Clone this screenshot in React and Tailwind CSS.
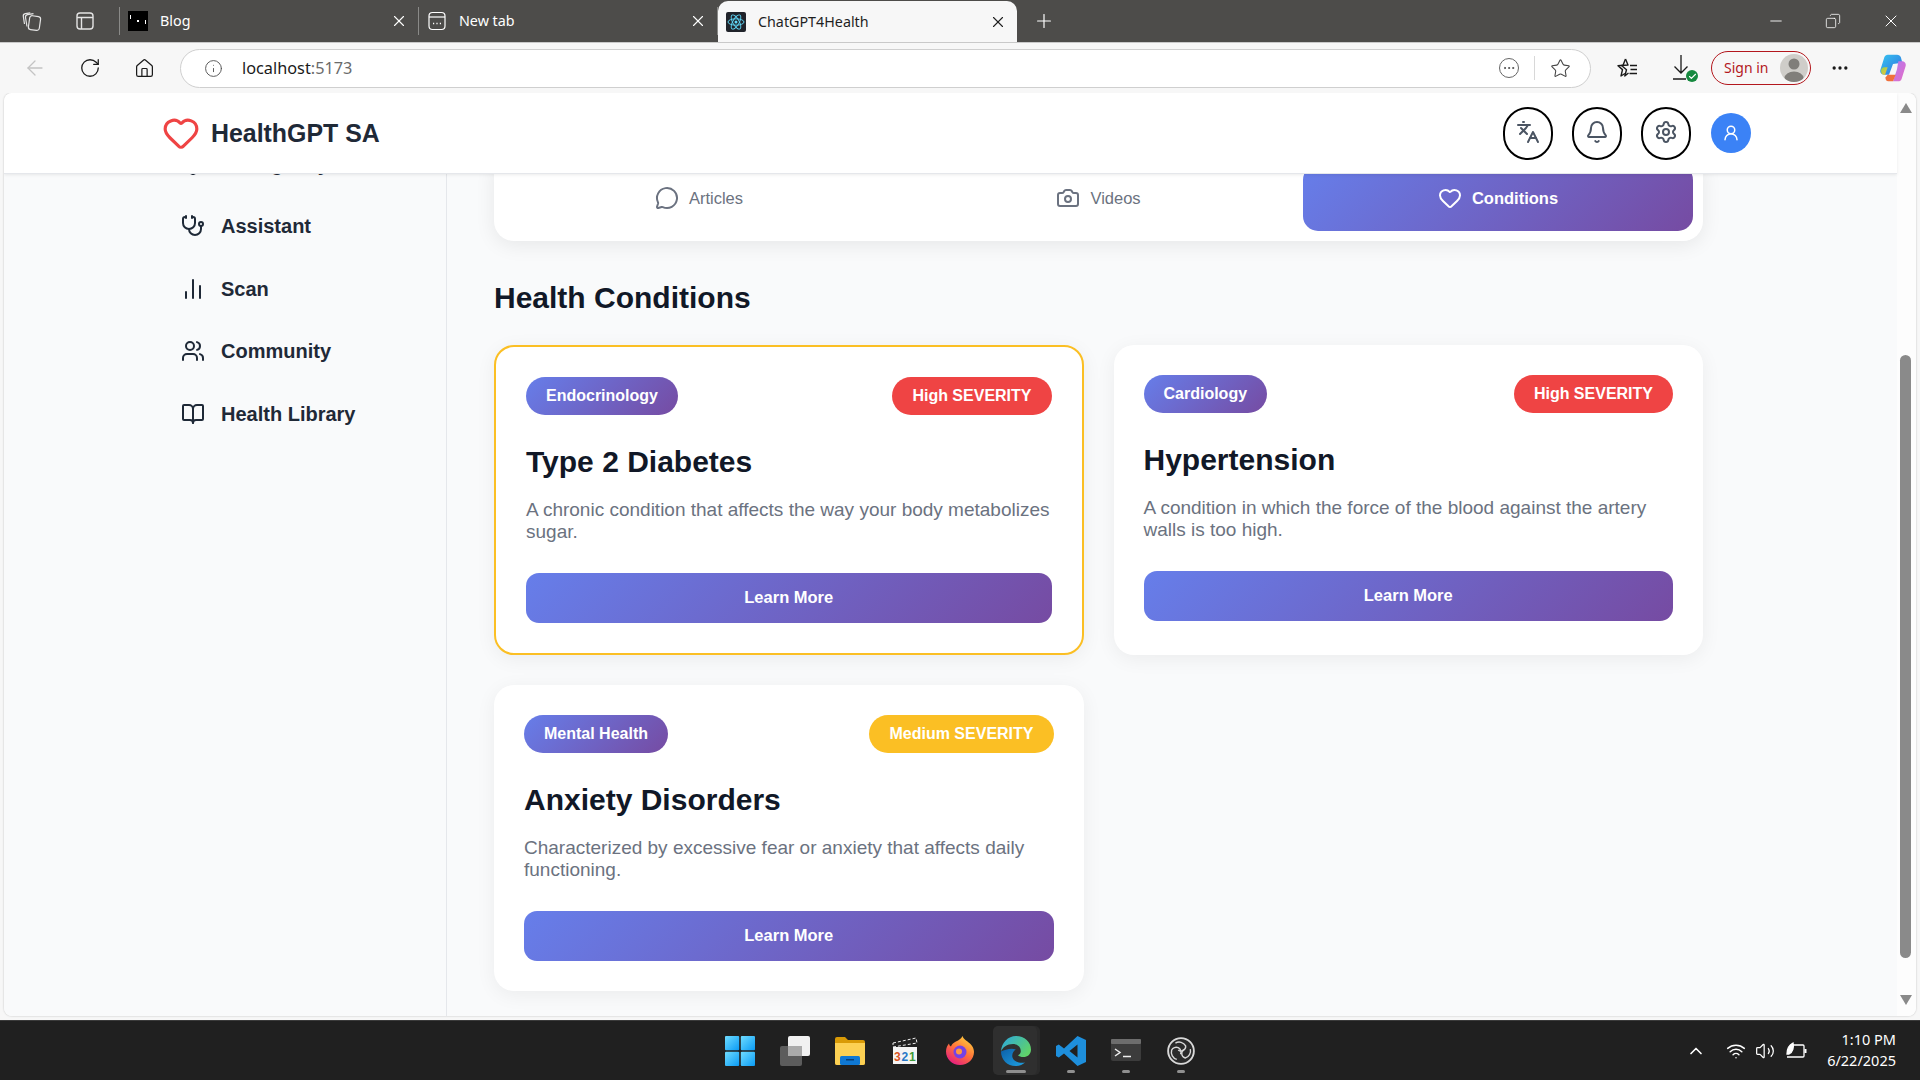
import {
  ArrowLeft, RotateCw, Home, Info, Star, MoreHorizontal, X, Plus, Minus, Heart, Languages, Bell, Settings, UserRound,
  Stethoscope, ChartNoAxesColumn, Users, BookOpen, Shield, MessageCircle, Camera, Copy, ChevronUp, Wifi, Volume2, Check,
} from 'lucide-react';

const gradient = 'bg-[linear-gradient(135deg,#667eea_0%,#764ba2_100%)]';

const navItems = [
  { name: 'Emergency', icon: Shield },
  { name: 'Assistant', icon: Stethoscope },
  { name: 'Scan', icon: ChartNoAxesColumn },
  { name: 'Community', icon: Users },
  { name: 'Health Library', icon: BookOpen },
];

const conditions = [
  { title: 'Type 2 Diabetes', field: 'Endocrinology', severity: 'High SEVERITY', sevClass: 'bg-[#ef4444]', text: 'A chronic condition that affects the way your body metabolizes sugar.', selected: true },
  { title: 'Hypertension', field: 'Cardiology', severity: 'High SEVERITY', sevClass: 'bg-[#ef4444]', text: 'A condition in which the force of the blood against the artery walls is too high.' },
  { title: 'Anxiety Disorders', field: 'Mental Health', severity: 'Medium SEVERITY', sevClass: 'bg-[#fbbf24]', text: 'Characterized by excessive fear or anxiety that affects daily functioning.' },
];

const BrowserTab = ({ icon, title, active }) => (
  <div className={`flex h-full w-[299px] items-center pl-2 pr-[10px] ${active ? 'rounded-t-[10px] bg-[#f7f7f7] text-[#1f1f1f]' : 'border-r border-[#8a8a88] text-white'}`}>
    {icon}
    <span className="ml-3 flex-1 font-['Noto_Sans',sans-serif] text-[14.300px]">{title}</span>
    <X className="h-[18px] w-[18px]" strokeWidth={1.5} />
  </div>
);

const ReactFavicon = () => (
  <svg viewBox="0 0 20 20" className="h-5 w-5 rounded-[2px] bg-[#20232a]">
    <g fill="none" stroke="#61dafb" strokeWidth="0.9">
      <ellipse cx="10" cy="10" rx="8" ry="3.2" />
      <ellipse cx="10" cy="10" rx="8" ry="3.2" transform="rotate(60 10 10)" />
      <ellipse cx="10" cy="10" rx="8" ry="3.2" transform="rotate(120 10 10)" />
    </g>
    <circle cx="10" cy="10" r="1.5" fill="#61dafb" />
  </svg>
);

const BlogFavicon = () => (
  <svg viewBox="0 0 20 20" className="h-5 w-5 bg-black">
    <rect x="2" y="4" width="1" height="4" fill="#fff" />
    <rect x="9" y="9" width="2" height="2" fill="#fff" />
    <rect x="17" y="9" width="1" height="4" fill="#fff" />
  </svg>
);

const NewTabIcon = () => (
  <svg viewBox="0 0 20 20" className="h-5 w-5" fill="none" stroke="#fff" strokeWidth="1.2">
    <rect x="2" y="1.5" width="16" height="17" rx="3.5" />
    <path d="M2 6h16" />
    <path d="M6 12.5h1.2M9.4 12.5h1.2M12.8 12.5H14" strokeWidth="1.6" />
  </svg>
);

const TabStrip = () => (
  <div className="flex h-[42px] items-center bg-[#4d4c4a] text-white">
    <svg viewBox="0 0 24 24" className="ml-[20px] h-6 w-6" fill="none" stroke="#e4e4e4" strokeWidth="1.2">
      <rect x="9" y="7" width="11" height="14" rx="2.5" transform="rotate(8 14 14)" />
      <path d="M7 17.5 5.5 8.5a2.5 2.5 0 0 1 2-2.8l6-1" />
      <path d="M4.5 15 3.3 7.4a2.4 2.4 0 0 1 2-2.7l5-.9" />
    </svg>
    <svg viewBox="0 0 24 24" className="ml-[29px] h-6 w-6" fill="none" stroke="#e4e4e4" strokeWidth="1.4">
      <rect x="4" y="4" width="16" height="16" rx="3" />
      <path d="M4 8.5h16M8.5 8.5V20" />
    </svg>
    <div className="ml-[22px] h-[28px] w-px bg-[#8a8a88]" />
    <div className="flex h-[28px] items-center">
      <BrowserTab icon={<BlogFavicon />} title="Blog" />
      <BrowserTab icon={<NewTabIcon />} title="New tab" />
    </div>
    <div className="h-full pt-[1px]">
      <BrowserTab active icon={<ReactFavicon />} title="ChatGPT4Health" />
    </div>
    <Plus className="ml-[16px] h-[22px] w-[22px]" strokeWidth={1.3} />
    <div className="ml-auto flex items-center gap-[40px] pr-[19px]">
      <Minus className="h-[18px] w-[18px]" strokeWidth={1.2} />
      <Copy className="h-[16px] w-[16px] -scale-x-100" strokeWidth={1.2} />
      <X className="h-[20px] w-[20px]" strokeWidth={1.2} />
    </div>
  </div>
);

const Toolbar = () => (
  <div className="flex h-[51px] items-center border-t border-[#c9c9c9] bg-[#f7f7f7] text-[#1a1a1a]">
    <ArrowLeft className="ml-[23px] h-6 w-6 text-[#c4c4c4]" strokeWidth={1.3} />
    <RotateCw className="ml-[32px] h-[22px] w-[22px]" strokeWidth={1.4} />
    <Home className="ml-[33px] h-[21px] w-[21px]" strokeWidth={1.4} />
    <div className="ml-[25px] flex h-[39px] w-[1411px] items-center rounded-full border border-[#cfcfcf] bg-white pl-[23px] pr-[19px]">
      <Info className="h-[19px] w-[19px] text-[#555]" strokeWidth={1.2} />
      <span className="ml-[19px] font-['Noto_Sans',sans-serif] text-[16.300px] text-[#1a1a1a]">localhost<span className="text-[#6b6b6b]">:5173</span></span>
      <div className="ml-auto flex h-5 w-5 items-center justify-center rounded-full border border-[#666]">
        <MoreHorizontal className="h-[14px] w-[14px] text-[#444]" strokeWidth={1.6} />
      </div>
      <div className="ml-[15px] h-[24px] w-px bg-[#d8d8d8]" />
      <Star className="ml-[15px] h-[21px] w-[21px] text-[#444]" strokeWidth={1.2} />
    </div>
    <svg viewBox="0 0 24 24" className="ml-[24px] h-[24px] w-[24px]" fill="none" stroke="#1a1a1a" strokeWidth="1.4" strokeLinejoin="round">
      <path d="M10.500 3 13 9l-6.500.5 5 4.200L9.800 20l3.700-3" />
      <path d="M10.500 3 8 9.300l-5 .4 4.500 3.900L6 20l4-2.500" />
      <path d="M15 9.500h7M15.500 13.500H22M14.500 17.500H22" />
    </svg>
    <div className="relative ml-[31px] h-7 w-6">
      <svg viewBox="0 0 24 28" className="h-7 w-6" fill="none" stroke="#1a1a1a" strokeWidth="1.300">
        <path d="M11 1v18M4.500 12.500 11 19l6.500-6.500M3 25h13" />
      </svg>
      <span className="absolute bottom-0 right-[-4px] flex h-[12px] w-[12px] items-center justify-center rounded-full bg-[#16893f]">
        <Check className="h-[9px] w-[9px] text-white" strokeWidth={3} />
      </span>
    </div>
    <div className="ml-[17px] flex h-[34px] w-[100px] items-center justify-between rounded-full border border-[#b3171d] pl-[12px] pr-[2px]">
      <span className="-mt-[2px] font-['Noto_Sans',sans-serif] text-[14px] text-[#b3171d]">Sign in</span>
      <svg viewBox="0 0 28 28" className="h-[28px] w-[28px] rounded-full bg-[#cfcdc9]">
        <circle cx="14" cy="10" r="5.5" fill="#807e7a" />
        <ellipse cx="14" cy="24" rx="9.5" ry="6.5" fill="#807e7a" />
      </svg>
    </div>
    <MoreHorizontal className="ml-[19px] h-[20px] w-[20px]" strokeWidth={2} />
    <svg viewBox="0 0 24 24" className="ml-[27px] h-[32px] w-[32px]">
      <defs>
        <linearGradient id="cpA" x1="0" y1="0" x2="1" y2="1"><stop offset="0" stopColor="#36c5f0" /><stop offset="1" stopColor="#2f6fe0" /></linearGradient>
        <linearGradient id="cpB" x1="0" y1="0" x2="1" y2="1"><stop offset="0" stopColor="#b07df2" /><stop offset="1" stopColor="#e86ac4" /></linearGradient>
        <linearGradient id="cpC" x1="0" y1="0" x2="1" y2="1"><stop offset="0" stopColor="#8fd14f" /><stop offset="1" stopColor="#f9c23c" /></linearGradient>
      </defs>
      <path d="M8 2h7c1.500 0 2.400.8 2.900 2L19 8l-7 1-3 8H5.500C3.500 17 2 15.500 2.500 13.500L5.500 4C6 2.800 6.800 2 8 2z" fill="url(#cpA)" />
      <path d="M16 7h2.500c2 0 3.500 1.500 3 3.500L18.500 20c-.4 1.300-1.400 2-2.600 2H12l3-9z" fill="url(#cpB)" />
      <path d="M8 17h6l-2 5H8.500C7 22 6 20.500 6.500 19z" fill="#f0703c" />
      <path d="M3 14c0-1.500 1-2.500 2.500-2.500H8L6 17H5c-1.200 0-2-1.300-2-3z" fill="url(#cpC)" />
    </svg>
  </div>
);

const AppHeader = () => (
  <header className="relative z-10 flex h-[81px] items-center border-b border-[#e5e7eb] bg-white pl-[158px] pr-[146px] shadow-[0_1px_3px_rgba(0,0,0,0.08)]">
    <Heart className="h-[38px] w-[38px] text-[#ef4444]" strokeWidth={2} />
    <span className="ml-[11px] mt-[2px] text-[24.900px] font-bold text-[#1f2937]">HealthGPT SA</span>
    <div className="ml-auto flex items-center gap-[19px]">
      {[Languages, Bell, Settings].map((Icon, index) => (
        <button key={index} className="flex h-[53px] w-[50px] items-center justify-center rounded-full border-2 border-black bg-white text-[#4b5563]">
          <Icon className="-mt-[2px] h-6 w-6" strokeWidth={2} />
        </button>
      ))}
      <div className="ml-[1px] flex h-10 w-10 items-center justify-center rounded-full bg-[#3b82f6] text-white">
        <UserRound className="h-[18px] w-[18px]" strokeWidth={2} />
      </div>
    </div>
  </header>
);

const Sidebar = () => (
  <aside className="w-[443px] shrink-0 overflow-hidden border-r border-[#e5e7eb] bg-[#f9fafb] pl-[177px]">
    <nav className="-mt-[35.500px] flex flex-col gap-[12px]">
      {navItems.map(({ name, icon: Icon }) => (
        <a key={name} className="flex h-[50.500px] items-center gap-[16px] text-[20px] font-bold text-[#1f2937]">
          <Icon className="h-6 w-6 shrink-0" strokeWidth={2} />
          {name}
        </a>
      ))}
    </nav>
  </aside>
);

const ContentTabs = () => (
  <div className="-mt-[19px] mb-[39px] grid grid-cols-3 gap-[9.600px] rounded-[20px] bg-white p-[10px] shadow-[0_4px_20px_rgba(0,0,0,0.08)]">
    <button className="flex h-[66px] items-center justify-center gap-[10px] rounded-[15px] text-[16.500px] text-[#6b7280]">
      <MessageCircle className="h-6 w-6" strokeWidth={2} /> Articles
    </button>
    <button className="flex h-[66px] items-center justify-center gap-[10px] rounded-[15px] text-[16.500px] text-[#6b7280]">
      <Camera className="h-6 w-6" strokeWidth={2} /> Videos
    </button>
    <button className={`flex h-[66px] items-center justify-center gap-[10px] rounded-[15px] text-[16.500px] font-bold text-white ${gradient}`}>
      <Heart className="h-6 w-6" strokeWidth={2} /> Conditions
    </button>
  </div>
);

const ConditionCard = ({ item }) => (
  <div className={`rounded-[20px] bg-white p-[30px] shadow-[0_4px_20px_rgba(0,0,0,0.06)] ${item.selected ? 'border-2 border-[#fbbf24]' : ''}`}>
    <div className="mb-[30px] flex items-center justify-between">
      <span className={`flex h-[38px] items-center rounded-full px-5 text-[16px] font-bold text-white ${gradient}`}>{item.field}</span>
      <span className={`flex h-[38px] items-center rounded-full px-5 text-[16px] font-bold text-white ${item.sevClass}`}>{item.severity}</span>
    </div>
    <h3 className="mb-[20px] text-[30px] font-bold leading-[34px] text-[#111827]">{item.title}</h3>
    <p className="mb-[30px] text-[19px] leading-[22px] text-[#6b7280]">{item.text}</p>
    <button className={`h-[50px] w-full rounded-[13px] pb-[2px] text-[16.500px] font-bold text-white ${gradient}`}>Learn More</button>
  </div>
);

const taskbarSlot = 'flex h-full w-[55.200px] flex-col items-center justify-center relative';

const Dot = ({ wide }) => (
  <span className={`absolute bottom-[7px] h-[3px] rounded-full bg-[#8f8f8f] ${wide ? 'w-5' : 'w-2'}`} />
);

const Taskbar = () => (
  <div className="flex h-[60px] items-center border-t border-[#3a3a3a] bg-[#202020] pl-[712px] text-white">
    <div className={taskbarSlot}>
      <svg viewBox="0 0 30 30" className="h-[30px] w-[30px]">
        <defs><linearGradient id="winG" x1="0" y1="0" x2="1" y2="1"><stop offset="0" stopColor="#6fdcff" /><stop offset="1" stopColor="#0a9bf5" /></linearGradient></defs>
        <rect x="0" y="0" width="14.200" height="14.200" rx="1" fill="url(#winG)" />
        <rect x="15.800" y="0" width="14.200" height="14.200" rx="1" fill="url(#winG)" />
        <rect x="0" y="15.800" width="14.200" height="14.200" rx="1" fill="url(#winG)" />
        <rect x="15.800" y="15.800" width="14.200" height="14.200" rx="1" fill="url(#winG)" />
      </svg>
    </div>
    <div className={taskbarSlot}>
      <svg viewBox="0 0 30 30" className="h-[30px] w-[30px]">
        <rect x="0" y="10" width="22" height="20" rx="2" fill="#5c5c5c" />
        <rect x="8" y="0" width="22" height="20" rx="2" fill="#f1f1f1" />
        <rect x="8" y="10" width="14" height="10" fill="#aaa" />
      </svg>
    </div>
    <div className={taskbarSlot}>
      <svg viewBox="0 0 30 28" className="h-[28px] w-[30px]">
        <path d="M0 2a2 2 0 0 1 2-2h8l3 3h15a2 2 0 0 1 2 2v21a2 2 0 0 1-2 2H2a2 2 0 0 1-2-2z" fill="#d99a06" />
        <path d="M0 6h30v20a2 2 0 0 1-2 2H2a2 2 0 0 1-2-2z" fill="#fcd053" />
        <rect x="5" y="19" width="20" height="9" rx="1.500" fill="#0f78d4" />
        <rect x="11" y="22" width="8" height="1.500" fill="#083f78" />
      </svg>
    </div>
    <div className={taskbarSlot}>
      <svg viewBox="0 0 28 28" className="h-[28px] w-[28px]">
        <path d="M2 6 25 1l1 5-24 4z" fill="#222" stroke="#eee" strokeWidth="1" strokeDasharray="3 2" />
        <rect x="2" y="10" width="24" height="17" fill="#f4f4f4" />
        <text x="3" y="24" fontSize="12" fontWeight="700" fontFamily="Liberation Sans" fill="#d9541e">3</text>
        <text x="10.500" y="24" fontSize="12" fontWeight="700" fontFamily="Liberation Sans" fill="#2a78c7">2</text>
        <text x="18" y="24" fontSize="12" fontWeight="700" fontFamily="Liberation Sans" fill="#3f9b3a">1</text>
      </svg>
    </div>
    <div className={taskbarSlot}>
      <svg viewBox="0 0 30 30" className="h-[30px] w-[30px]">
        <defs><linearGradient id="ffG" x1="0.8" y1="0" x2="0.2" y2="1"><stop offset="0" stopColor="#ffd43c" /><stop offset="0.5" stopColor="#ff7139" /><stop offset="1" stopColor="#e31587" /></linearGradient></defs>
        <path d="M15 29C7 29 1 23 1 15.500 1 12 2.500 9 4 7.500c.2 1.500 1 2.500 2 3C7.500 7 10 6 11 5.500 14 4 16 3 17.500 0c1 3 3 4 5 5.500 4 3 6.500 6 6.500 10.500C29 23 23 29 15 29z" fill="url(#ffG)" />
        <circle cx="15" cy="16" r="6.500" fill="#7542e5" />
        <circle cx="14" cy="15.500" r="3" fill="#ff9640" />
      </svg>
    </div>
    <div className={taskbarSlot}>
      <div className="absolute left-[5px] top-[5px] h-[49px] w-[44px] rounded-[5px] bg-[#2f2f2f] shadow-[3px_0_0_#2a2a2a]" />
      <svg viewBox="0 0 30 30" className="relative h-[30px] w-[30px]">
        <defs>
          <linearGradient id="edgeA" x1="0" y1="0" x2="1" y2="1"><stop offset="0" stopColor="#0c5fa8" /><stop offset="1" stopColor="#1fa0e0" /></linearGradient>
          <linearGradient id="edgeB" x1="0" y1="0" x2="1" y2="0.600"><stop offset="0" stopColor="#2aa6e2" /><stop offset="1" stopColor="#5fd26a" /></linearGradient>
        </defs>
        <path d="M15 0c8.500 0 15 6 15 13.500 0 5-3.800 7.500-7.500 7.500-2.500 0-4.500-.8-5.500-1.800 2-1 2.800-2.700 2.800-4.300C19.800 10.500 16 8 12 8 6 8 1.500 11.500 0 15.500 .5 6.500 7 0 15 0z" fill="url(#edgeB)" />
        <path d="M0 15.500C0 24 6.500 30 14.500 30c4 0 7.500-1.500 9.500-3.500-4 1-11 0-12.500-5-1-3.300 1-6.500 3.300-8-5-2-11 .5-14.800 2z" fill="url(#edgeA)" />
      </svg>
      <Dot wide />
    </div>
    <div className={taskbarSlot}>
      <svg viewBox="0 0 30 30" className="h-[30px] w-[30px]">
        <path d="M21.500 0 30 4v22l-8.500 4L8 17.500 2.800 21.500 0 20V10l2.800-1.500L8 12.500zm0 8.500L13.500 15l8 6.500z" fill="#1e8fdc" />
      </svg>
      <Dot />
    </div>
    <div className={taskbarSlot}>
      <svg viewBox="0 0 30 24" className="h-[24px] w-[30px]">
        <rect width="30" height="22" rx="2" fill="#3c3c3c" />
        <rect width="30" height="5" rx="1" fill="#6d6d6d" />
        <path d="M4 10l5 3.500L4 17" fill="none" stroke="#eee" strokeWidth="1.500" />
        <path d="M12 17.500h8" stroke="#eee" strokeWidth="1.500" />
      </svg>
      <Dot />
    </div>
    <div className={taskbarSlot}>
      <svg viewBox="0 0 30 30" className="h-[28px] w-[28px]" fill="none" stroke="#d8d8d8" strokeWidth="1.500">
        <circle cx="15" cy="15" r="13.800" fill="#2a2a2a" strokeWidth="2" />
        <path d="M9 6.500a8 8 0 0 1 11 3 5 5 0 0 1-8 4.500" />
        <path d="M25 13a8 8 0 0 1-5.500 9.500 5 5 0 0 1-1.500-9" />
        <path d="M10.500 24a8 8 0 0 1-5.500-10 5 5 0 0 1 9.500 4.500" />
      </svg>
      <Dot />
    </div>
    <div className="ml-auto flex items-center pr-[24px]">
      <ChevronUp className="h-[20px] w-[20px]" strokeWidth={2} />
      <Wifi className="ml-[20px] h-[20px] w-[20px]" strokeWidth={1.800} />
      <Volume2 className="ml-[9px] h-[20px] w-[20px]" strokeWidth={1.500} />
      <svg viewBox="0 0 22 18" className="ml-[10px] h-[18px] w-[22px]" fill="none" stroke="#fff" strokeWidth="1.300">
        <path d="M6 3h12a1 1 0 0 1 1 1v10a1 1 0 0 1-1 1H2" />
        <path d="M20.500 7v4" strokeWidth="2" />
        <path d="M2 12c0-5 2-9 6-11 1 4 0 9-4 11z" fill="#fff" />
      </svg>
      <div className="-mt-[2px] ml-[20px] flex flex-col items-end font-['Noto_Sans',sans-serif] text-[14.500px] leading-[21px]">
        <span>1:10 PM</span>
        <span>6/22/2025</span>
      </div>
    </div>
  </div>
);

const Scrollbar = () => (
  <div className="flex w-[19px] shrink-0 flex-col items-center bg-[#fdfdfd] pr-[2px] pt-[10px]">
    <div className="h-0 w-0 border-x-[6.500px] border-b-[10px] border-x-transparent border-b-[#8a8a8a]" />
    <div className="mt-[242px] h-[603px] w-[11px] rounded-full bg-[#8a8a8a]" />
    <div className="mt-[37px] h-0 w-0 border-x-[6.500px] border-t-[10px] border-x-transparent border-t-[#8a8a8a]" />
  </div>
);

const App = () => (
  <div className="flex h-screen flex-col overflow-hidden bg-[#f7f7f7] font-['Liberation_Sans',Arial,sans-serif]">
    <TabStrip />
    <Toolbar />
    <div className="flex min-h-0 flex-1 overflow-hidden pb-[4px] pl-[4px] pr-[4px]">
      <div className="flex min-w-0 flex-1 overflow-hidden rounded-[8px] bg-white shadow-[0_0_2px_rgba(0,0,0,0.25)]">
        <div className="flex min-w-0 flex-1 flex-col">
          <AppHeader />
          <div className="flex min-h-0 flex-1">
            <Sidebar />
            <main className="min-w-0 flex-1 overflow-hidden bg-[#f9fafb] pl-[47px]">
              <div className="w-[1209px]">
                <ContentTabs />
                <h2 className="mb-[30px] text-[30px] font-bold leading-[35px] text-[#111827]">Health Conditions</h2>
                <div className="grid grid-cols-2 gap-[30px]">
                  {conditions.map((item) => (
                    <ConditionCard key={item.title} item={item} />
                  ))}
                </div>
              </div>
            </main>
          </div>
        </div>
        <Scrollbar />
      </div>
    </div>
    <Taskbar />
  </div>
);

export default App;
